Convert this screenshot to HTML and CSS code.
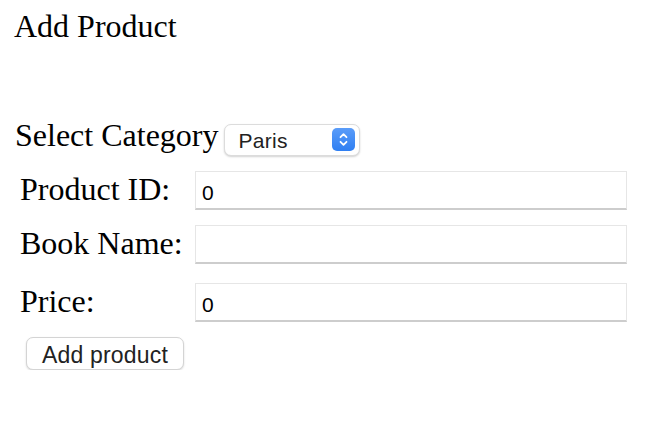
FILE: index.html
```html
<!DOCTYPE html>
<html>
<head>
<meta charset="utf-8">
<title>Add Product</title>
<link rel="stylesheet" href="styles.css">
</head>
<body>
<div class="page">
  <div class="title">Add Product</div>
  <div class="category-row">
    <span class="category-label">Select Category</span>
    <span class="select-wrap">
      <select class="select">
        <option>Paris</option>
      </select>
      <span class="chev">
        <svg width="23" height="23" viewBox="0 0 23 23">
          <path d="M8.5 9.2 L11.5 6.2 L14.5 9.2" fill="none" stroke="#fff" stroke-width="1.8" stroke-linecap="round" stroke-linejoin="round"/>
          <path d="M8.5 13.8 L11.5 16.8 L14.5 13.8" fill="none" stroke="#fff" stroke-width="1.8" stroke-linecap="round" stroke-linejoin="round"/>
        </svg>
      </span>
    </span>
  </div>
  <div class="form">
    <div class="row">
      <label class="label">Product ID:</label>
      <input class="input" type="text" value="0">
    </div>
    <div class="row row-2">
      <label class="label">Book Name:</label>
      <input class="input" type="text" value="">
    </div>
    <div class="row row-3">
      <label class="label">Price:</label>
      <input class="input" type="text" value="0">
    </div>
  </div>
  <button class="btn">Add product</button>
</div>
</body>
</html>
```
FILE: styles.css
```css
html, body {
  margin: 0;
  padding: 0;
  background: #ffffff;
}

.page {
  padding: 6px 0 0 14px;
  font-family: "Liberation Serif", "Times New Roman", serif;
  color: #000;
}

.title {
  font-size: 32px;
  line-height: 40px;
  height: 40px;
}

.category-row {
  display: flex;
  align-items: flex-start;
  margin-top: 69px;
  margin-left: 1px;
  font-size: 32px;
  line-height: 40px;
  height: 40px;
}

.category-label {
  white-space: nowrap;
}

.select-wrap {
  position: relative;
  display: flex;
  margin-left: 6px;
  margin-top: 9px;
  width: 136px;
  height: 32px;
}

.select {
  -webkit-appearance: none;
  appearance: none;
  display: block;
  box-sizing: border-box;
  width: 136px;
  height: 32px;
  margin: 0;
  padding: 0 0 0 13px;
  border: 1px solid #dcdcdc;
  border-radius: 7px;
  background: #fff;
  box-shadow: 0 1px 2px rgba(0, 0, 0, 0.18);
  font-family: "Liberation Sans", Arial, sans-serif;
  font-size: 21px;
  letter-spacing: 0.3px;
  color: #222;
  outline: none;
}

.chev {
  position: absolute;
  left: 108px;
  top: 4px;
  width: 23px;
  height: 23px;
  border-radius: 5px;
  background: linear-gradient(#5a9cf9, #2f7ff2);
  pointer-events: none;
}

.chev svg {
  display: block;
}

.form {
  margin-top: 16px;
  margin-left: 6px;
}

.row {
  display: flex;
  align-items: flex-start;
}

.row-2 {
  margin-top: 15px;
}

.row-3 {
  margin-top: 19px;
}

.label {
  width: 175px;
  flex: none;
  font-size: 32px;
  line-height: 36px;
  white-space: nowrap;
}

.input {
  box-sizing: border-box;
  width: 432px;
  height: 39px;
  margin: 0;
  padding: 6px 6px 0 6px;
  border: 1px solid #e6e6e6;
  border-bottom: 2px solid #cdcdcd;
  border-radius: 0;
  background: #fff;
  font-family: "Liberation Sans", Arial, sans-serif;
  font-size: 21px;
  color: #000;
  outline: none;
}

.btn {
  display: block;
  box-sizing: border-box;
  margin: 15px 0 0 12px;
  width: 158px;
  height: 33px;
  padding: 4px 0 0 0;
  border: 1px solid #d4d4d4;
  border-radius: 7px;
  background: #fff;
  box-shadow: 0 1px 2px rgba(0, 0, 0, 0.15);
  font-family: "Liberation Sans", Arial, sans-serif;
  font-size: 23px;
  letter-spacing: 0.2px;
  color: #222;
}
```
